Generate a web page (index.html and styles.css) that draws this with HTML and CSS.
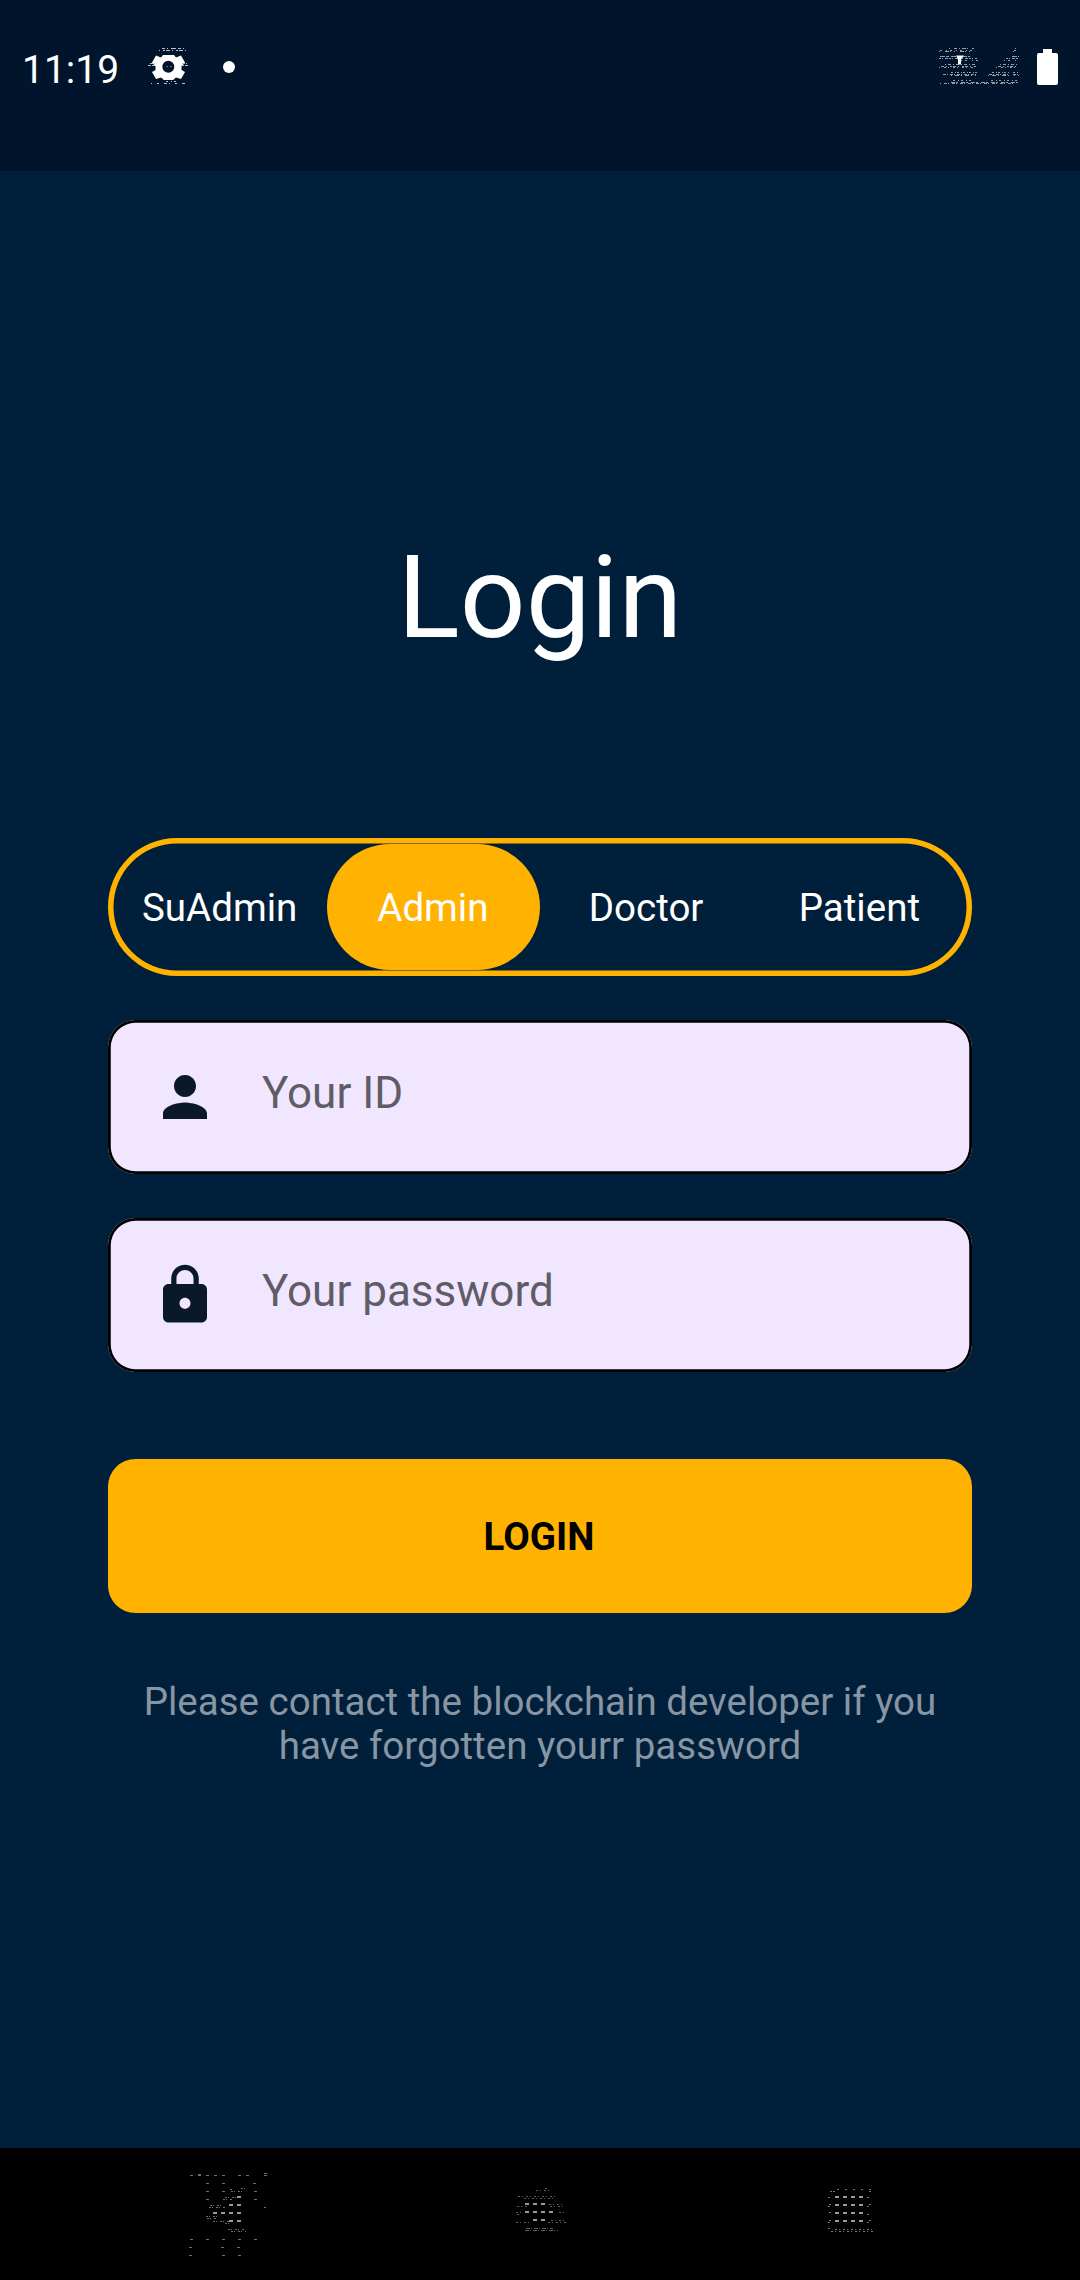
FILE: index.html
```html
<!DOCTYPE html>
<html lang="en">
<head>
<meta charset="utf-8">
<title>Login</title>
<link rel="stylesheet" href="styles.css">
</head>
<body>
<div class="screen">
  <header class="status-bar">
    <span class="clock">11:19</span>
    <svg class="gear" width="42" height="40" viewBox="0 0 42 40">
      <path fill="#fff" fill-rule="evenodd" d="M15 8h11l2 2.500 5-2 4 7-3.500 4v3.500l3.500 2-4 7-5-1.500L25 33H16l-3-2.500L8 32l-4-7 3.500-2v-3.500L4 15.500l4-7 5 2zM20.300 13.700a6 6 0 1 0 0 12a6 6 0 1 0 0-12z"/>
      <g stroke="#b9c0c9" fill="none">
        <path stroke-dasharray="3 2 1 3 5 2" d="M14 1.500h24"/>
        <path stroke-dasharray="1 3 2 1 4 2" d="M11 3.500h30"/>
        <path stroke-dasharray="1 5 2 5 3 2" d="M3 36.500h34"/>
        <path stroke-dasharray="2 3 1 2" d="M18 34.500h10"/>
        <path stroke-dasharray="3 1" d="M2 16.500h5M0 18.500h8M34 16.500h5M33 18.500h8"/>
        <path stroke-opacity=".5" stroke-dasharray="2 2" d="M18 19.500h6"/>
      </g>
    </svg>
    <span class="dot"></span>
    <svg class="signals" width="84" height="40" viewBox="0 0 84 40">
      <g stroke="#c6ccd4" stroke-opacity=".75" fill="none">
        <path stroke-dasharray="1 4 3 2 1 2 4 1" d="M12 1.500h25M78 1.500h4"/>
        <path stroke-dasharray="2 4 1 3" d="M3 3.500h32M77 3.500h5"/>
        <path stroke-dasharray="1 5 4 1 1 3" d="M2 4.500h34M76 4.500h6"/>
        <path stroke-dasharray="5 1 3 2" d="M3 9.500h30M75 9.500h7"/>
        <path stroke-dasharray="2 1 1 2 3 1" d="M2 11.500h38M69 11.500h13"/>
        <path stroke-dasharray="1 3 2 5" d="M24 13.500h17M67 13.500h15"/>
        <path stroke-dasharray="1 2 3 2" d="M8 17.500h32M63 17.500h19"/>
        <path stroke-dasharray="3 2 1 3 2 1" d="M4 19.500h36M61 19.500h21"/>
        <path stroke-dasharray="1 4 2 2" d="M2 20.500h34M59 20.500h23"/>
        <path stroke-dasharray="2 2 1 1" d="M14 25.500h26M55 25.500h18M76 25.500h6"/>
        <path stroke-dasharray="3 1 1 2" d="M6 27.500h34M52 27.500h20M76 27.500h6"/>
        <path stroke-dasharray="1 3 4 2" d="M14 28.500h25M51 28.500h21M77 28.500h5"/>
        <path stroke-dasharray="2 3 1 2" d="M16 33.500h18M54 33.500h28"/>
        <path stroke-dasharray="4 1 2 3" d="M14 35.500h68"/>
        <path stroke-dasharray="1 3 3 1" d="M3 36.500h76"/>
      </g>
      <path fill="#fff" d="M19 8.500h8l-3 4v5h-3v-5z"/>
    </svg>
    <svg class="battery" width="22" height="36" viewBox="0 0 22 36">
      <path fill="#fff" d="M6 0h9v4h4a2 2 0 0 1 2 2v28a2 2 0 0 1-2 2H2a2 2 0 0 1-2-2V6a2 2 0 0 1 2-2h4z"/>
    </svg>
  </header>

  <main class="content">
    <h1 class="title">Login</h1>
    <div class="tabs">
      <span class="tab">SuAdmin</span>
      <span class="tab tab-active">Admin</span>
      <span class="tab">Doctor</span>
      <span class="tab">Patient</span>
    </div>
    <div class="field">
      <svg class="field-icon" viewBox="0 0 24 24"><path d="M12 12c2.210 0 4-1.790 4-4s-1.790-4-4-4-4 1.790-4 4 1.790 4 4 4zm0 2c-2.670 0-8 1.340-8 4v2h16v-2c0-2.660-5.330-4-8-4z"/></svg>
      <span class="hint">Your ID</span>
    </div>
    <div class="field">
      <svg class="field-icon" viewBox="0 0 24 24"><path d="M18 8h-1V6c0-2.760-2.240-5-5-5S7 3.240 7 6v2H6c-1.100 0-2 .9-2 2v10c0 1.100.9 2 2 2h12c1.100 0 2-.9 2-2V10c0-1.100-.9-2-2-2zm-6 9c-1.100 0-2-.9-2-2s.9-2 2-2 2 .9 2 2-.9 2-2 2zm3.100-9H8.900V6c0-1.710 1.390-3.100 3.100-3.100 1.710 0 3.100 1.390 3.100 3.100v2z"/></svg>
      <span class="hint">Your password</span>
    </div>
    <div class="login-button">LOGIN</div>
    <p class="note">Please contact the blockchain developer if you<br>have forgotten yourr password</p>
  </main>

  <footer class="nav-bar">
    <svg class="nav-icon" width="90" height="90" viewBox="0 0 90 90">
      <g stroke="#999" stroke-width="2" fill="none">
        <path d="M50 25h4M42 33h4M50 33h4M26 41h4M34 41h4M42 41h4M50 41h4M42 49h4M50 49h4"/>
      </g>
      <g stroke="#6c6c6c" fill="none">
        <path stroke-dasharray="3 5" d="M3 3.500h35M51 3.500h12M77 1.500h4M77 3.500h3M11 2.500h3"/>
        <path stroke-dasharray="3 13" d="M19 11.500h20M66 11.500h13M19 19.500h20M67 19.500h3M19 27.500h3M67 27.500h4M77 35.500h2"/>
        <path stroke-dasharray="2 1 1 3" d="M44 19.500h14M43 17.500h2M54 16.500h4M38 25.500h12M36 27.500h10M23 33.500h14M22 35.500h17M19 44.500h14M20 46.500h10M26 49.500h16M38 51.500h6M41 57.500h16M44 59.500h15"/>
        <path stroke-dasharray="3 13" d="M3 67.500h16M19 67.500h62M2 75.500h3M34 75.500h22M2 83.500h3M35 83.500h20"/>
      </g>
    </svg>
    <svg class="nav-icon" width="90" height="90" viewBox="0 0 90 90">
      <g stroke="#999" stroke-width="2" fill="none">
        <path d="M29 32h4M37 32h4M45 32h4M29 40h4M37 40h4M45 40h4M53 40h4M37 48h4M45 48h4"/>
      </g>
      <g stroke="#5c5c5c" fill="none">
        <path stroke-dasharray="2 2 1 3" d="M40 18.500h14M49 16.500h4M22 24.500h38M28 26.500h32M21 34.500h10M53 32.500h16M54 34.500h15M20 40.500h5M63 40.500h6M21 42.500h4M20 50.500h15M55 48.500h14M52 50.500h18"/>
        <path stroke-dasharray="4 1 1 2" d="M30 56.500h27M29 58.500h33"/>
      </g>
    </svg>
    <svg class="nav-icon" width="90" height="90" viewBox="0 0 90 90">
      <g stroke="#999" stroke-width="2" stroke-dasharray="4 4" fill="none">
        <path d="M31 25h28M31 33h28M31 41h28M31 49h28"/>
      </g>
      <g stroke="#777" fill="none">
        <path stroke-dasharray="2 6" d="M33 17.500h28"/>
        <path stroke-dasharray="2 1" d="M26 19.500h5M65 17.500h3M65 19.500h3M24 25.500h2M25 32.500h2M24 34.500h2M25 40.500h2M25 48.500h2M24 50.500h2M63 25.500h2M65 32.500h2M63 34.500h2M63 42.500h2M65 48.500h2M63 50.500h2M24 56.500h2"/>
        <path stroke-dasharray="2 2 1 3" d="M31 57.500h37M27 59.500h43"/>
      </g>
    </svg>
  </footer>
</div>
</body>
</html>
```
FILE: styles.css
```css
* { box-sizing: border-box; }

body {
  margin: 0;
  background: #001f3a;
  font-family: Roboto, "Noto Sans", sans-serif;
}

.screen {
  width: 1080px;
  height: 2280px;
  display: flex;
  flex-direction: column;
}

.status-bar {
  height: 171px;
  display: flex;
  align-items: flex-start;
  padding: 47px 22px 0 22px;
  background: #00142b;
  color: #fff;
}

.clock {
  width: 100px;
  font-size: 39px;
  line-height: 46px;
  white-space: nowrap;
}

.gear { margin-left: 26px; }

.dot {
  width: 12px;
  height: 12px;
  margin: 14px 0 0 33px;
  border-radius: 50%;
  background: #fff;
}

.signals { margin-left: auto; }

.battery { margin: 2px -1px 0 16px; }

.content {
  flex: 1;
  display: flex;
  flex-direction: column;
  padding: 0 108px;
}

.title {
  margin: 360px 0 0;
  height: 134px;
  color: #fff;
  font-size: 115.500px;
  font-weight: 400;
  line-height: 134px;
  text-align: center;
}

.tabs {
  height: 137.500px;
  margin-top: 173px;
  padding: 5.500px;
  display: flex;
  border-radius: 68.750px;
  box-shadow: inset 0 0 0 5.500px #ffb300;
}

.tab {
  flex: 1 1 0;
  display: flex;
  align-items: center;
  justify-content: center;
  padding: 2px 1px 0 0;
  border-radius: 64px;
  color: #fff;
  font-size: 38.500px;
}

.tab-active { background: #ffb300; }

.field {
  height: 154px;
  margin-top: 44px;
  padding: 0 44px;
  display: flex;
  align-items: center;
  border-radius: 27.500px;
  background: #f0e6ff;
  box-shadow: inset 0 0 0 2.750px #000;
}

.field-icon {
  width: 66px;
  height: 66px;
  fill: #0a1929;
}

.hint {
  margin: -8px 0 0 44px;
  color: #605c66;
  font-size: 44px;
}

.login-button {
  height: 154px;
  margin-top: 87.500px;
  padding-right: 2px;
  display: flex;
  align-items: center;
  justify-content: center;
  border-radius: 27.500px;
  background: #ffb300;
  color: #000;
  font-size: 38.500px;
  font-weight: 700;
}

.note {
  margin: 66.500px 0 0;
  color: #8895a3;
  font-size: 38.500px;
  line-height: 44px;
  text-align: center;
}

.nav-bar {
  height: 132px;
  display: flex;
  padding: 24px 186px 0 187px;
  justify-content: space-between;
  background: #000;
}
```
